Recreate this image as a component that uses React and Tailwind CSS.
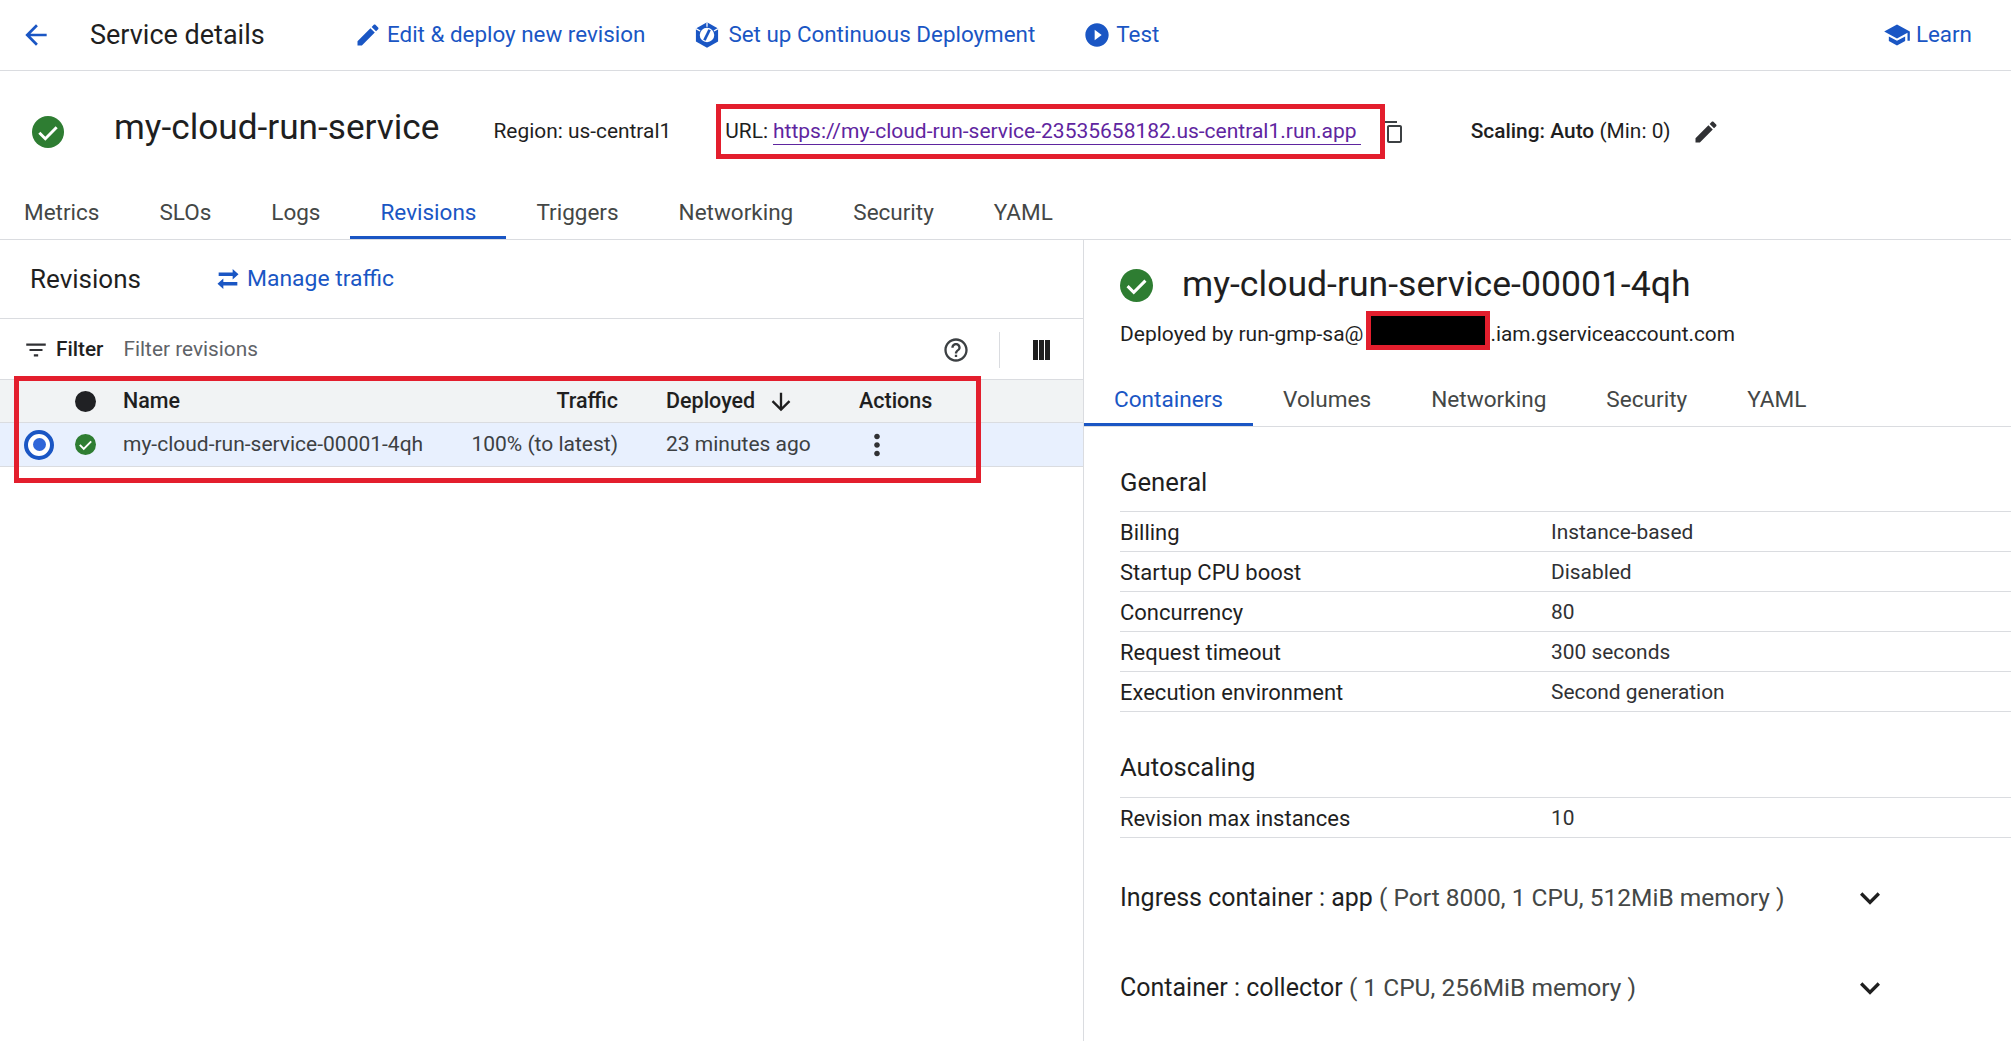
import React from 'react';

const paths = {
  back: 'M20 11H7.83l5.59-5.59L12 4l-8 8 8 8 1.41-1.41L7.83 13H20v-2z',
  edit: 'M3 17.25V21h3.75L17.81 9.94l-3.75-3.75L3 17.25zM20.71 7.04c.39-.39.39-1.02 0-1.41l-2.34-2.34c-.39-.39-1.02-.39-1.41 0l-1.83 1.83 3.75 3.75 1.83-1.83z',
  play: 'M12 2C6.48 2 2 6.48 2 12s4.48 10 10 10 10-4.48 10-10S17.52 2 12 2zm-2 14.5v-9l6 4.5-6 4.5z',
  school: 'M5 13.18v4L12 21l7-3.82v-4L12 17l-7-3.82zM12 3L1 9l11 6 9-4.91V17h2V9L12 3z',
  swap: 'M21 8l-5-4.5v3H4v3h12v3l5-4.5zM3 16l5 4.5v-3h12v-3H8v-3l-5 4.5z',
  filter: 'M10 18h4v-2h-4v2zM3 6v2h18V6H3zm3 7h12v-2H6v2z',
  help: 'M11 18h2v-2h-2v2zm1-16C6.48 2 2 6.48 2 12s4.48 10 10 10 10-4.48 10-10S17.52 2 12 2zm0 18c-4.41 0-8-3.59-8-8s3.59-8 8-8 8 3.59 8 8-3.59 8-8 8zm0-14c-2.21 0-4 1.79-4 4h2c0-1.1.9-2 2-2s2 .9 2 2c0 2-3 1.75-3 5h2c0-2.25 3-2.5 3-5 0-2.21-1.79-4-4-4z',
  columns: 'M4 2h5v20H4zM10 2h5v20h-5zM16 2h5v20h-5z',
  down: 'M20 12l-1.41-1.41L13 16.17V4h-2v12.17l-5.58-5.59L4 12l8 8 8-8z',
  more: 'M12 8c1.1 0 2-.9 2-2s-.9-2-2-2-2 .9-2 2 .9 2 2 2zm0 2c-1.1 0-2 .9-2 2s.9 2 2 2 2-.9 2-2-.9-2-2-2zm0 6c-1.1 0-2 .9-2 2s.9 2 2 2 2-.9 2-2-.9-2-2-2z',
  expand: 'M16.59 8.59L12 13.17 7.41 8.59 6 10l6 6 6-6z',
  copy: 'M16 1H4c-1.1 0-2 .9-2 2v14h2V3h12V1zm3 4H8c-1.1 0-2 .9-2 2v14c0 1.1.9 2 2 2h11c1.1 0 2-.9 2-2V7c0-1.1-.9-2-2-2zm0 16H8V7h11v14z',
};

function Icon({ name, className }) {
  return (
    <svg viewBox="0 0 24 24" fill="currentColor" className={`shrink-0 ${className}`}>
      <path d={paths[name]} />
    </svg>
  );
}

// Cloud Build style hexagon used by the Continuous Deployment link
function BuildIcon({ className }) {
  return (
    <svg viewBox="0 0 24 24" className={`shrink-0 ${className}`}>
      <path d="M12 1L2.5 6.5v11L12 23l9.5-5.5v-11L12 1z" fill="currentColor" />
      <circle cx="12" cy="12" r="6.2" fill="#fff" />
      <path d="M9.8 16.5l4.4-9" stroke="currentColor" strokeWidth="2.4" fill="none" />
      <path d="M12 1v4M2.5 6.5l3.6 2.1M21.5 6.5l-3.6 2.1" stroke="#fff" strokeWidth="1.1" fill="none" />
    </svg>
  );
}

function StatusOk({ className }) {
  return (
    <svg viewBox="0 0 24 24" className={`shrink-0 ${className}`}>
      <circle cx="12" cy="12" r="12" fill="#2e7d32" />
      <path d="M5.5 12.5l4.5 4.5 8.5-8.5" fill="none" stroke="#fff" strokeWidth="2.2" />
    </svg>
  );
}

function Action({ icon, label, className = '' }) {
  return (
    <div className={`flex items-center text-[#1a56c4] text-[22.4px] whitespace-nowrap ${className}`}>
      {icon === 'build' ? <BuildIcon className="w-[28px] h-[28px]" /> : <Icon name={icon} className="w-[28px] h-[28px]" />}
      <span className={icon === 'build' ? 'ml-[7px]' : 'ml-[5px]'}>{label}</span>
    </div>
  );
}

function Tab({ label, active, className }) {
  return (
    <div className={`flex items-center justify-center px-[30px] border-b-[3px] ${className} ${active ? 'text-[#1a56c4] border-[#1a56c4]' : 'text-[#444746] border-transparent'}`}>
      {label}
    </div>
  );
}

function DetailRow({ label, value }) {
  return (
    <div className="flex items-center h-10 pt-[2px] border-b border-[#dadce0]">
      <div className="w-[431px] text-[22px] text-[#1f1f1f]">{label}</div>
      <div className="text-[20.9px] text-[#303134]">{value}</div>
    </div>
  );
}

function Expander({ title, detail, className }) {
  return (
    <div className={`flex items-center text-[25px] text-[#1f1f1f] ${className}`}>
      <div className="w-[734px] shrink-0 whitespace-nowrap">
        {title} <span className="text-[#444746] text-[24.5px]">{detail}</span>
      </div>
      <Icon name="expand" className="w-[40px] h-[40px] -ml-[4px]" />
    </div>
  );
}

export default function App() {
  return (
    <div className="w-[2011px] h-[1041px] overflow-hidden bg-white relative font-['Roboto',sans-serif] text-[#1f1f1f]">
      {/* top toolbar */}
      <div className="flex items-center h-[71px] border-b border-[#dadce0] pl-[20px]">
        <Icon name="back" className="w-[32px] h-[32px] text-[#1a56c4]" />
        <div className="ml-[38px] w-[264px] text-[27px]">Service details</div>
        <Action icon="edit" label="Edit & deploy new revision" />
        <Action icon="build" label="Set up Continuous Deployment" className="ml-[48px]" />
        <Action icon="play" label="Test" className="ml-[48px]" />
        <Action icon="school" label="Learn" className="ml-auto mr-[39px]" />
      </div>

      {/* service summary */}
      <div className="flex items-center h-[118px] pt-[3px] text-[20.9px] whitespace-nowrap">
        <StatusOk className="w-[32px] h-[32px] ml-[32px]" />
        <div className="ml-[50px] text-[35.2px] leading-none pb-[7px]">my-cloud-run-service</div>
        <div className="ml-[54px]">Region: us-central1</div>
        <div className="ml-[54px]">URL:</div>
        <a className="ml-[5px] text-[21px] text-[#5f259f] border-b border-[#5f259f] pr-[4px] leading-[26px]">https://my-cloud-run-service-23535658182.us-central1.run.app</a>
        <Icon name="copy" className="w-[24px] h-[24px] text-[#3c4043] ml-[20px]" />
        <div className="ml-[66px]"><span className="font-medium">Scaling: Auto</span> (Min: 0)</div>
        <Icon name="edit" className="w-[28px] h-[28px] text-[#303134] ml-[21px]" />
      </div>

      {/* main tabs */}
      <div className="flex items-center h-[51px] border-b border-[#dadce0] text-[22.5px]">
        {['Metrics', 'SLOs', 'Logs', 'Revisions', 'Triggers', 'Networking', 'Security', 'YAML'].map((t, i) => (
          <div key={t} className={i === 0 ? '-ml-[6px]' : ''}>
            <Tab label={t} active={t === 'Revisions'} className="h-[50px]" />
          </div>
        ))}
      </div>

      <div className="flex h-[801px]">
        {/* revisions list */}
        <div className="w-[1084px] shrink-0 border-r border-[#dadce0]">
          <div className="flex items-center h-[79px] border-b border-[#dadce0] pl-[30px]">
            <div className="text-[26px] w-[184px]">Revisions</div>
            <Action icon="swap" label="Manage traffic" className="text-[22.9px]" />
          </div>
          <div className="flex items-center h-[60px] pt-[2px] pl-[23px] text-[20.8px]">
            <Icon name="filter" className="w-[26px] h-[26px] text-[#303134]" />
            <span className="ml-[7px] font-medium">Filter</span>
            <span className="ml-[20px] text-[#5f6368]">Filter revisions</span>
            <Icon name="help" className="w-[28px] h-[28px] text-[#3c4043] ml-auto" />
            <div className="w-px h-[36px] bg-[#dadce0] ml-[29px]" />
            <Icon name="columns" className="w-[24px] h-[24px] text-[#1f1f1f] ml-[29px] mr-[30px]" />
          </div>
          <div className="flex items-center h-[44px] pt-[1px] bg-[#f1f3f4] border-y border-[#dadce0] text-[21.5px] font-medium">
            <div className="w-[96px] shrink-0 flex justify-end"><div className="w-[21px] h-[21px] rounded-full bg-[#202124]" /></div>
            <div className="ml-[27px] w-[275px]">Name</div>
            <div className="w-[220px] text-right">Traffic</div>
            <div className="ml-[48px] flex items-center gap-[12px] w-[193px]">
              Deployed <Icon name="down" className="w-[28px] h-[28px]" />
            </div>
            <div>Actions</div>
          </div>
          <div className="flex items-center h-[44px] bg-[#e8f0fe] border-b border-[#dadce0] text-[21px] text-[#3c4043]">
            <div className="w-[30px] h-[30px] ml-[24px] rounded-full border-[4px] border-[#1a56c4] bg-white flex items-center justify-center shrink-0">
              <div className="w-[13px] h-[13px] rounded-full bg-[#2f66d8]" />
            </div>
            <StatusOk className="w-[21px] h-[21px] ml-[21px]" />
            <div className="ml-[27px] w-[275px] whitespace-nowrap">my-cloud-run-service-00001-4qh</div>
            <div className="w-[220px] text-right">100% (to latest)</div>
            <div className="ml-[48px] w-[193px]">23 minutes ago</div>
            <Icon name="more" className="w-[34px] h-[34px] text-[#303134] ml-px" />
          </div>
        </div>

        {/* revision details */}
        <div className="flex-1 min-w-0">
          <div className="flex items-center pl-[36px] pt-[30px] h-[60px]">
            <StatusOk className="w-[33px] h-[33px]" />
            <div className="ml-[29px] text-[35.6px] leading-none">my-cloud-run-service-00001-4qh</div>
          </div>
          <div className="pl-[36px] mt-[22px] text-[21px] leading-[24px] h-[24px] flex whitespace-nowrap">
            <span>Deployed by run-gmp-sa@</span>
            <div className="w-[124px] h-[39px] -mt-[11px] ml-[3px] bg-black border-[5px] border-[#e31e2d] relative z-10 shrink-0" />
            <span className="text-[20.8px]">.iam.gserviceaccount.com</span>
          </div>
          <div className="flex items-center h-[52px] mt-[29px] border-b border-[#dadce0] text-[22.6px]">
            {['Containers', 'Volumes', 'Networking', 'Security', 'YAML'].map((t, i) => (
              <Tab key={t} label={t} active={i === 0} className="h-[51px] pt-[2px]" />
            ))}
          </div>
          <div className="pl-[36px]">
            <div className="h-[58px] mt-[26px] flex items-center text-[25.7px]">General</div>
            <div className="border-t border-[#dadce0]">
              <DetailRow label="Billing" value="Instance-based" />
              <DetailRow label="Startup CPU boost" value="Disabled" />
              <DetailRow label="Concurrency" value="80" />
              <DetailRow label="Request timeout" value="300 seconds" />
              <DetailRow label="Execution environment" value="Second generation" />
            </div>
            <div className="h-[58px] mt-[27px] pb-[2px] flex items-center text-[25.7px]">Autoscaling</div>
            <div className="border-t border-[#dadce0]">
              <DetailRow label="Revision max instances" value="10" />
            </div>
            <Expander title="Ingress container : app" detail="( Port 8000, 1 CPU, 512MiB memory )" className="mt-[45px] h-[30px]" />
            <Expander title="Container : collector" detail="( 1 CPU, 256MiB memory )" className="mt-[60px] h-[30px]" />
          </div>
        </div>
      </div>

      {/* annotation boxes drawn on top of the screenshot */}
      <div className="absolute left-[716px] top-[104px] w-[669px] h-[55px] border-[5px] border-[#e31e2d]" />
      <div className="absolute left-[14px] top-[376px] w-[967px] h-[107px] border-[5px] border-[#e31e2d]" />
    </div>
  );
}
